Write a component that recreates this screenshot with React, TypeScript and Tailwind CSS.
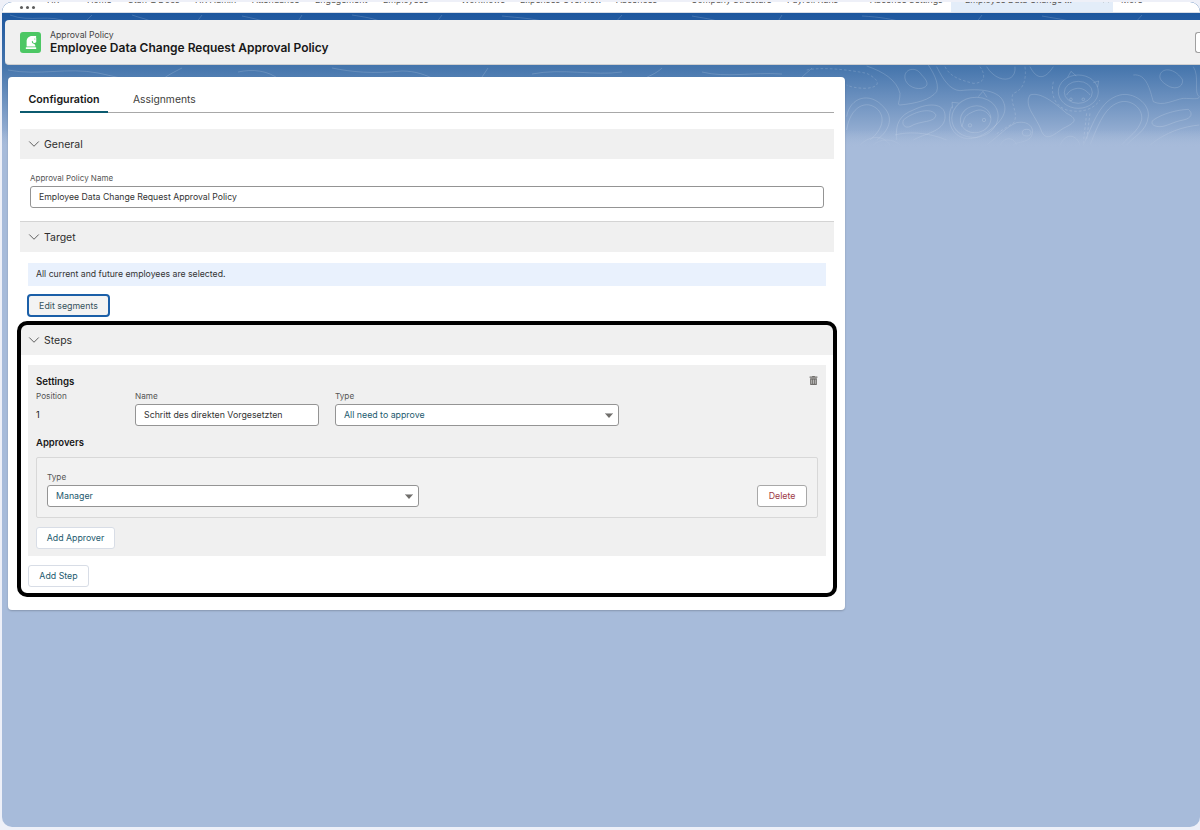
// Approval policy configuration page

import { ChevronDown, X } from 'lucide-react';
import { FaChessKnight, FaTrashAlt } from 'react-icons/fa';

const navItems = [
  { label: 'HR', className: 'w-[40px]', chevron: false },
  { label: 'Home', className: 'w-[41px]', chevron: false },
  { label: 'Staff & Docs', className: 'w-[67px]', chevron: false },
  { label: 'HR Admin', className: 'w-[57px]', chevron: false },
  { label: 'Attendance', className: 'w-[63px]', chevron: false },
  { label: 'Engagement', className: 'w-[68px]', chevron: false },
  { label: 'Employees', className: 'w-[78px]', chevron: true },
  { label: 'Workflows', className: 'w-[59px]', chevron: false },
  { label: 'Expenses Overview', className: 'w-[96px]', chevron: false },
  { label: 'Absences', className: 'w-[75px]', chevron: true },
  { label: 'Company Structure', className: 'w-[96px]', chevron: false },
  { label: 'Payroll Runs', className: 'w-[83px]', chevron: true },
  { label: 'Absence Settings', className: 'w-[81px]', chevron: false },
];

function Caret() {
  return (
    <svg width="8" height="5" viewBox="0 0 8 5" className="shrink-0">
      <path d="M0 0h8v1H0z" fill="#b0b0b0" />
      <path d="M0.5 1h7L4 5z" fill="#706e6b" />
    </svg>
  );
}

function Topography() {
  return (
    <svg width="1198" height="146" viewBox="0 0 1198 146" className="absolute left-0 top-0" fill="none" stroke="#ffffff" strokeOpacity="0.16" strokeWidth="1">
      <g strokeOpacity="0.16">
        <path d="M8 13c20 8 40-2 60 8M90 13l-8 8M130 13c8 3 16 4 22 8M200 13l-6 8M240 14c10 2 18 4 28 7M300 13l-5 8M350 13c12 2 22 3 32 8M440 13l-6 8M500 14c18 2 30 2 48 7M620 13l-7 8M690 14c10 2 22 3 30 7M780 13l-5 8M860 14c18 1 30 3 44 7M980 13l-6 8M1040 14c10 2 22 3 34 7M1140 13l-7 8" />
        <path d="M6 68c30 6 60-3 90 3 20 4 30 8 44 7M180 66c-8 4-16 8-20 12M236 70c14-3 30-2 42 8M330 66c20 4 40 6 70 3 14 0 24 4 34 9M486 66l-8 12M530 72c30-6 62 2 90-2M660 66c-6 6-14 8-20 12M700 70c24 6 50 0 80 2M810 66c-5 5-10 8-12 12" />
      </g>
      <g transform="translate(798 58) scale(0.3333)" strokeWidth="3">
        <path d="M315 45C320 25 350 20 365 45C380 60 392 78 365 85C340 90 310 70 315 45Z" />
        <path d="M410 20C430 60 450 90 480 92C540 85 600 90 612 130C625 165 590 195 570 210C545 230 510 245 480 230C450 215 440 175 455 140" />
        <path d="M200 18C250 35 290 60 300 100C300 125 290 135 300 135C350 130 390 120 410 95C420 70 395 30 385 15" />
        <path d="M20 30C70 20 150 30 200 40C240 60 245 80 200 85C170 85 150 80 140 75" strokeDasharray="8 6" />
        <path d="M435 20C450 50 480 60 520 70C560 70 555 40 540 20" strokeDasharray="8 6" />
        <path d="M560 20C590 70 650 70 645 20" />
        <path d="M675 20C680 60 670 90 640 100C625 125 660 160 640 190C620 200 600 215 585 225" strokeDasharray="8 6" />
        <path d="M690 20C710 60 735 60 760 20" />
        <ellipse cx="525" cy="172" rx="70" ry="60" transform="rotate(-12 525 172)" />
        <ellipse cx="527" cy="178" rx="46" ry="40" transform="rotate(-12 527 178)" />
        <path d="M535 110l14-16 12 18M458 145l-2-18 20 2" />
        <path d="M485 200c10-20 0-30 35-45 20-10 40-5 52 18" />
        <circle cx="510" cy="196" r="5" />
        <circle cx="552" cy="180" r="5" />
        <ellipse cx="835" cy="95" rx="60" ry="50" />
        <ellipse cx="835" cy="97" rx="42" ry="33" />
        <path d="M803 52l10-18 16 14M880 68l16-5-3 18" />
        <path d="M800 105c8-14 20-18 32-20 14-2 30 8 38 20" />
        <circle cx="813" cy="118" r="4" />
        <circle cx="850" cy="118" r="4" />
        <path d="M760 65C750 110 770 140 800 150C840 160 880 150 900 120" strokeDasharray="8 6" />
        <path d="M690 105C720 95 760 125 800 160C840 180 820 190 790 205C760 225 740 245 725 215C710 170 670 140 690 105Z" />
        <path d="M140 170C150 110 210 95 250 140C285 175 265 215 230 240" />
        <path d="M140 210C150 140 200 115 235 150C260 180 240 215 210 240" />
        <path d="M290 240C285 190 300 165 340 150C390 125 440 130 435 175C430 215 375 220 340 240" />
        <path d="M310 180C340 155 395 140 408 165C405 190 360 180 330 200C315 205 305 195 310 180Z" />
        <path d="M440 240C380 215 320 215 285 225M180 255C210 225 250 225 270 255" />
        <path d="M560 255C600 225 620 200 650 188C690 180 710 210 690 235C670 250 650 245 640 255" />
        <ellipse cx="680" cy="218" rx="13" ry="10" />
        <path d="M850 255C880 190 900 120 960 105C1000 95 1050 130 1045 170C1040 215 1000 230 980 255" />
        <path d="M870 255C895 195 915 135 965 125C995 120 1030 145 1025 180C1015 215 985 230 965 255" />
        <path d="M1000 45C1040 40 1050 90 1060 125C1090 140 1120 120 1150 115C1175 115 1198 120 1198 110" />
        <path d="M1060 180C1090 160 1130 150 1165 148C1180 160 1175 175 1150 180C1120 185 1100 200 1080 200C1060 200 1050 190 1060 180Z" />
        <path d="M1082 40C1095 20 1130 30 1148 60C1150 85 1120 90 1100 75C1085 65 1075 55 1082 40Z" />
        <path d="M1180 20C1200 50 1180 100 1198 110M1050 255C1100 215 1150 200 1198 195" />
        <path d="M780 255C800 215 830 225 840 255M600 255C615 230 640 230 650 255M220 255C240 235 280 235 300 255" />
        <path d="M860 160L850 250M870 160L860 240" strokeDasharray="8 6" />
      </g>
    </svg>
  );
}

export default function App() {
  return (
    <div className="h-[830px] w-[1200px] overflow-hidden bg-[#eef0f8] pl-[2px] pb-[3px] pt-[2px] font-['Inter',_'Liberation_Sans',_sans-serif] text-[#181818]">
      <div className="relative h-full overflow-hidden rounded-[10px] bg-[#a7bbda]">
        <div className="absolute inset-x-0 top-0 h-[146px] bg-gradient-to-b from-[#12509b] via-[#4676ad] via-45% to-[#a7bbda]" />
        <Topography />
        <div className="absolute inset-x-0 top-[128px] h-[18px] bg-gradient-to-b from-[#a7bbda00] to-[#a7bbda]" />

        <div className="relative flex h-full flex-col">
          {/* app nav, cut off by the top of the capture */}
          <nav className="flex h-[11px] shrink-0 items-end overflow-hidden border-b border-[#d8dde6] bg-white pl-[18px] text-[8.8px] leading-[12px] text-[#55534f]">
            <div className="flex h-[10px] w-[27px] shrink-0 items-center gap-[3px] self-start">
              <span className="h-[3px] w-[3px] rounded-full bg-[#5c5c5c]" />
              <span className="h-[3px] w-[3px] rounded-full bg-[#5c5c5c]" />
              <span className="h-[3px] w-[3px] rounded-full bg-[#5c5c5c]" />
            </div>
            {navItems.map((item) => (
              <div key={item.label} className={`flex h-[12px] shrink-0 items-center gap-1 whitespace-nowrap self-start -mt-[8px] ${item.className}`}>
                <span>{item.label}</span>
                {item.chevron && <ChevronDown size={7} className="ml-2 shrink-0" />}
              </div>
            ))}
            <div className="flex h-[12px] w-[162px] shrink-0 items-start self-stretch bg-[#e3edf9] pl-[14px]">
              <div className="flex -mt-[8px] h-[12px] items-center whitespace-nowrap">
                <span className="w-[122px]">Employee Data Change ...</span>
                <ChevronDown size={7} />
                <X size={8} className="ml-[8px]" />
              </div>
            </div>
            <div className="ml-[8px] flex h-[12px] shrink-0 items-center gap-3 self-start -mt-[8px]">
              <span>More</span>
              <ChevronDown size={7} />
            </div>
          </nav>
          <div className="flex-1 pl-[3px]">
            <header className="mt-[7px] flex h-[45px] items-center gap-2 rounded-l-[4px] border-b border-[#d0d0d0] bg-[#f0f0f0] pl-[15px]">
              <div className="flex h-[21px] w-[21px] shrink-0 items-center justify-center rounded-[3px] bg-[#4cc764]">
                <FaChessKnight size={14} color="#ffffff" className="-scale-x-100" />
              </div>
              <div className="ml-[1px] flex-1">
                <div className="text-[8.7px] leading-[11px] text-[#444444]">Approval Policy</div>
                <div className="text-[12px] font-semibold leading-[13px]">Employee Data Change Request Approval Policy</div>
              </div>
              <div className="h-[21px] w-[5px] self-center rounded-l-[3px] border border-r-0 border-[#a0a0a0] bg-white" />
            </header>

            <main className="ml-[3px] mt-[12px] h-[533px] w-[837px] rounded-[4px] bg-white pl-[12px] pr-[11px] pt-[13px] shadow-[0_1px_2px_rgba(0,0,0,0.2)]">
              <div className="flex h-[23px] items-center border-b border-[#a8a8a8] pb-[2px]">
                <div className="relative flex h-full w-[88px] items-center justify-center text-[10.7px] font-semibold">
                  Configuration
                  <div className="absolute inset-x-0 -bottom-[3px] h-[2px] bg-[#0b5a6f]" />
                </div>
                <div className="ml-[25px] text-[10.3px] text-[#3e3e3c]">Assignments</div>
              </div>

              <Section title="General" className="mt-[16px]" />
              <div className="px-[10px]">
                <label className="mt-[14px] block text-[8px] leading-[10px] text-[#555555]">Approval Policy Name</label>
                <div className="mt-[3px] flex h-[22px] items-center rounded-[3px] border border-[#949494] bg-white px-[8px] pt-px text-[8.7px] text-[#333333]">
                  Employee Data Change Request Approval Policy
                </div>
              </div>

              <div className="mt-[13px] border-t border-[#d4d4d4]" />
              <Section title="Target" />
              <div className="ml-[8px] mr-[8px] mt-[11px] flex h-[23px] items-center bg-[#e9f1fd] px-[8px] text-[8.7px] text-[#333333]">
                All current and future employees are selected.
              </div>
              <button className="ml-[7px] mt-[8px] block h-[23px] w-[83px] rounded-[4px] border-2 border-[#1b5fa8] bg-[#f3f3f3] text-[8.8px] text-[#35525c]">
                Edit segments
              </button>

              <div className="relative mt-[8px]">
                {/* annotation frame around the steps block */}
                <div className="pointer-events-none absolute -left-[3px] -right-[3px] -top-[4px] h-[276px] rounded-[10px] border-4 border-black" />
                <Section title="Steps" />
                <div className="ml-[8px] mr-[8px] mt-[10px] h-[191px] bg-[#f0f0f0] px-[8px] pt-[11px]">
                  <div className="flex h-[12px] items-center justify-between">
                    <div className="text-[9.7px] font-semibold leading-[12px]">Settings</div>
                    <FaTrashAlt size={9} color="#706e6b" className="self-start" />
                  </div>
                  <div className="mt-[3px] flex">
                    <div className="w-[99px]">
                      <div className="text-[8.2px] leading-[10px] text-[#555555]">Position</div>
                      <div className="mt-[3px] flex h-[22px] items-center text-[9px]">1</div>
                    </div>
                    <div className="w-[184px]">
                      <div className="text-[8.2px] leading-[10px] text-[#555555]">Name</div>
                      <div className="mt-[3px] flex h-[22px] items-center rounded-[3px] border border-[#949494] bg-white px-[8px] text-[8.8px] text-[#333333]">
                        Schritt des direkten Vorgesetzten
                      </div>
                    </div>
                    <div className="ml-[16px] w-[284px]">
                      <div className="text-[8.2px] leading-[10px] text-[#555555]">Type</div>
                      <div className="mt-[3px] flex h-[22px] items-center justify-between rounded-[3px] border border-[#949494] bg-white pl-[8px] pr-[5px] text-[8.8px] text-[#1d5a6e]">
                        All need to approve
                        <Caret />
                      </div>
                    </div>
                  </div>
                  <div className="mt-[11px] text-[9.5px] font-semibold leading-[12px]">Approvers</div>
                  <div className="mt-[8px] flex h-[61px] w-[782px] items-end justify-between rounded-[2px] border border-[#d8d8d8] bg-[#f2f2f2] px-[10px] pb-[10px]">
                    <div className="w-[372px]">
                      <div className="text-[8.2px] leading-[10px] text-[#555555]">Type</div>
                      <div className="mt-[3px] flex h-[22px] items-center justify-between rounded-[3px] border border-[#949494] bg-white pl-[8px] pr-[5px] text-[8.8px] text-[#1d5a6e]">
                        Manager
                        <Caret />
                      </div>
                    </div>
                    <button className="h-[22px] w-[50px] rounded-[3px] border border-[#a8a8a8] bg-white text-[8.8px] text-[#9e3a45]">Delete</button>
                  </div>
                  <button className="mt-[9px] block h-[22px] w-[79px] rounded-[3px] border border-[#d8dde6] bg-white text-[8.8px] text-[#1d5a6e]">Add Approver</button>
                </div>
                <button className="ml-[8px] mt-[9px] block h-[22px] w-[61px] rounded-[3px] border border-[#d8dde6] bg-white text-[8.8px] text-[#1d5a6e]">Add Step</button>
              </div>
            </main>
          </div>
        </div>
      </div>
    </div>
  );
}

function Section({ title, className = '' }: { title: string; className?: string }) {
  return (
    <div className={`flex h-[30px] items-center bg-[#f0f0f0] pl-[5px] text-[10.5px] text-[#2e2e2e] ${className}`}>
      <ChevronDown size={18} strokeWidth={1.3} color="#5c5c5c" />
      <span className="ml-[1px] pt-px">{title}</span>
    </div>
  );
}
